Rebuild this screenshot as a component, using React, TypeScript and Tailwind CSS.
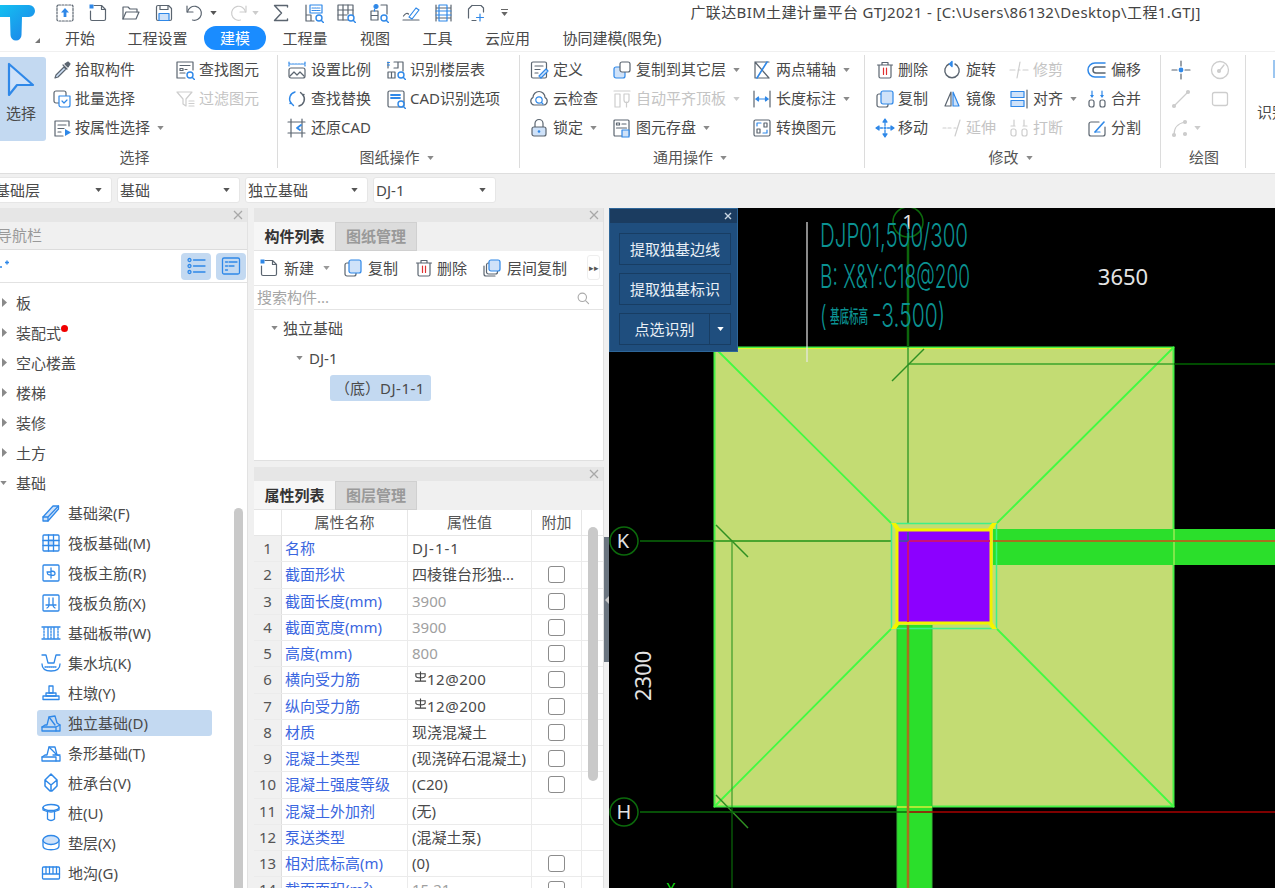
import React from "react";

const G = "#5b6570", B = "#2f88e8", L = "#cfe2f9", D = "#cdcdcd";

function Ic({ children, s = 20, c = G, w = 1.2 }: { children: React.ReactNode; s?: number; c?: string; w?: number }) {
  return (
    <svg width={s} height={s} viewBox="0 0 20 20" fill="none" stroke={c} strokeWidth={w} strokeLinecap="round" strokeLinejoin="round" className="shrink-0 block">
      {children}
    </svg>
  );
}
const Mag = () => <g stroke={B} strokeWidth={1.4}><circle cx="15" cy="15" r="3" fill="#fff" /><path d="M17.2 17.2 19.4 19.4" /></g>;
const Caret = ({ className = "", c = "#8a8a8a" }: { className?: string; c?: string }) => (
  <svg width="7" height="4" viewBox="0 0 8 5" className={"shrink-0 block " + className}><path d="M0 0h8L4 5z" fill={c} /></svg>
);

const icons: Record<string, React.ReactNode> = {
  upload: <Ic><rect x="2" y="2" width="16" height="16" rx="1.5" strokeDasharray="2 1.4" /><path d="M10 5 6 9.5h2.6V14h2.8V9.5H14z" fill={B} stroke="none" /></Ic>,
  newdoc: <Ic><path d="M6 2.5h7.5l4 4V16a1.5 1.5 0 0 1-1.5 1.5H4A1.5 1.5 0 0 1 2.500 16V8" /><path d="M13.500 2.500v4h4" /><rect x="1.500" y="1.500" width="4" height="4" fill={B} stroke="none" /></Ic>,
  open: <Ic><path d="M2 16V4h5l2 2h7v3" /><path d="M2 16l3-7h13l-3 7z" /></Ic>,
  save: <Ic><path d="M2.500 4a1.500 1.500 0 0 1 1.500-1.500h10.500l3 3V16a1.500 1.500 0 0 1-1.500 1.500H4A1.500 1.500 0 0 1 2.500 16z" /><path d="M6 3v3.500h8V3" /><rect x="5" y="10.500" width="10" height="7" fill={L} stroke={B} /></Ic>,
  undo: <Ic><path d="M3 3v6h6" /><path d="M3.500 9a7 7 0 1 1 5 8" /></Ic>,
  redo: <Ic c={D}><path d="M17 3v6h-6" /><path d="M16.500 9a7 7 0 1 0-5 8" /></Ic>,
  sum: <Ic w={1.4}><path d="M16.500 4V2.500H3.500L10.500 10l-7 7.500h13V16" /></Ic>,
  q1: <Ic><path d="M2 2v16h8M2 12h5v6" /><rect x="6" y="2" width="12" height="8" stroke={B} /><path d="M8 5h8M8 7.500h8" stroke={B} strokeDasharray="1.500 1" /><Mag /></Ic>,
  q2: <Ic><rect x="2" y="2" width="15" height="15" /><path d="M2 7h15M2 12h9M7 2v15M12 2v9" /><Mag /></Ic>,
  q3: <Ic><path d="M2 8h7v9H2zM2 12.500h7M12 2h6v9" /><circle cx="7" cy="3.500" r="2" fill={B} stroke={B} /><path d="M5.500 6v2" stroke={B} /><Mag /></Ic>,
  pen: <Ic><path d="M2 17h16" /><path d="M2.500 13q3-4 5-2" /><path d="M8 14 15 5l3 2-7 9z" stroke={B} /></Ic>,
  frame: <Ic><path d="M2 2v16M17 2v16M2 5h15M2 15h15" /><path d="M2 8h15M2 12h15" stroke={B} /><rect x="5" y="2" width="8" height="16" stroke={B} /></Ic>,
  addframe: <Ic><path d="M6 2.500h9l2.500 2.500v4M2.500 6v9M2.500 6 6 2.500M6 17.500h4" /><path d="M14 11v7M10.500 14.500h7" stroke={B} /></Ic>,
  eyedrop: <Ic><path d="M3 18l1-3 8-8 2 2-8 8z" fill={L} /><path d="M11 5l4 4M13 4l3-2 2 2-2 3z" fill={G} /></Ic>,
  batch: <Ic><rect x="2" y="2" width="12" height="12" rx="2" /><path d="M7 7h11v9a2 2 0 0 1-2 2H9a2 2 0 0 1-2-2z" stroke={B} fill="#fff" /><path d="M10 12l2 2 3-3" stroke={B} /></Ic>,
  attr: <Ic><path d="M17 8V3H3v15h8" /><path d="M6 7h8M6 10.500h6M6 14h3" /><path d="M13 11l6 3.500-6 3.500z" fill={B} stroke="none" /></Ic>,
  find: <Ic><path d="M10 18H2V2h16v8" /><path d="M5 5.500h10" /><rect x="5" y="8.500" width="3" height="2" /><path d="M10 9.500h2M5 13h5" /><Mag /></Ic>,
  filter: <Ic c={D}><path d="M2 3h15l-6 7v7l-3-2v-5z" /><path d="M14 12h5M14 14.500h5M14 17h5" /></Ic>,
  scale: <Ic><path d="M2 2v4M18 2v4M2 4h16" stroke={B} strokeDasharray="2 1" /><rect x="2" y="8" width="16" height="10" rx="2" /><path d="M3 16l4-4 3 3 3-3 4 4" /></Ic>,
  floortb: <Ic><path d="M2 8V2M2 12h7v6H2zM5.500 12v6" /><path d="M8 2h9v9M12 2v6H8" /><path d="M1.500 2.500h2M1.500 5h2" stroke={B} /><Mag /></Ic>,
  replace: <Ic w={1.4}><path d="M8 3a7 7 0 0 0-4 11" stroke={B} /><path d="M12 17a7 7 0 0 0 4-11" /><path d="M3 14.500l1-.5 2.500 2.500" stroke={B} /><path d="M17 5.500l-1 .5-2.500-2.500" /></Ic>,
  cadopt: <Ic><rect x="2" y="2" width="16" height="16" rx="1.5" /><path d="M5 6h9M5 9h9" stroke={B} strokeWidth={1.8} strokeDasharray="2 .8" /><Mag /></Ic>,
  restore: <Ic><path d="M4 1v18M15 1v18M1 4h17M1 15h17" /><path d="M14 7l-4 3 3 2" stroke={B} strokeWidth={1.8} /></Ic>,
  define: <Ic><rect x="2.500" y="2" width="15" height="16" rx="1.500" /><path d="M6 6h8M6 9.500h5M6 13h3" /><path d="M10 16l7-7 2 2-7 7z" stroke={B} fill={L} /></Ic>,
  cloud: <Ic><path d="M5 16a4 4 0 0 1-1-7.500 6 6 0 0 1 12 0 4 4 0 0 1-1 7.500z" /><circle cx="10" cy="11" r="3.200" stroke={B} /><path d="M12.500 13.500 14 15" stroke={B} /></Ic>,
  lock: <Ic><path d="M6 9V5.500a4 4 0 0 1 8 0V9" /><rect x="3" y="9" width="14" height="9" rx="2" fill={L} /><circle cx="10" cy="13.500" r="1.300" fill={B} stroke="none" /></Ic>,
  copyto: <Ic><rect x="2" y="7" width="11" height="11" rx="2" fill={L} stroke={B} /><rect x="8" y="2" width="10" height="10" rx="2" fill="#fff" /></Ic>,
  auto: <Ic c={D}><path d="M2 2h16M3 5h5v13H3z" /><path d="M12 5h5v6a2.500 2.500 0 0 1-5 0z" /><path d="M14.500 13v5" /></Ic>,
  store: <Ic><rect x="2" y="2" width="15" height="16" rx="1" /><rect x="4.500" y="5" width="3" height="2" /><path d="M10 6h4M4.500 10h10" /><rect x="10" y="12" width="7" height="7" fill={L} stroke={B} /></Ic>,
  axis: <Ic><path d="M3 2h14M3 18h14M3 2l14 16M3 2v16" /><path d="M15 2 5 18" stroke={B} strokeWidth={1.600} /></Ic>,
  dim: <Ic><path d="M2 2v16M18 2v16" /><path d="M4 10h12" stroke={B} /><path d="M4 10l2.500-2v4zM16 10l-2.500-2v4z" fill={B} stroke={B} /></Ic>,
  conv: <Ic><rect x="2" y="2" width="16" height="16" rx="1.500" /><path d="M5 8V5h4M15 12v3h-4" stroke={B} /><path d="M5 11h3v4H5zM12 5h3v4h-3z" /></Ic>,
  del: <Ic><path d="M2.500 5h15M7 5V2.500h6V5M4 5v11.500A1.500 1.500 0 0 0 5.500 18h9a1.500 1.500 0 0 0 1.500-1.500V5" /><path d="M8.500 8v6.500M11.500 8v6.500" stroke="#e03030" /></Ic>,
  rot: <Ic w={1.4}><path d="M7 4a7.200 7.200 0 1 0 6 0" /><path d="M10 1.500 7.500 4l2.500 2.500z" fill={B} stroke={B} /></Ic>,
  trim: <Ic c={D}><path d="M1 10h5M9 10h2M14 10h5M11 2 8 18" /></Ic>,
  offset: <Ic w={1.5}><path d="M18 3H8a7 7 0 0 0 0 14h10" stroke={B} /><path d="M18 7H9a3 3 0 0 0 0 6h9" /></Ic>,
  copy: <Ic><rect x="2" y="5" width="11" height="13" rx="2" /><rect x="6" y="2" width="12" height="13" rx="2" fill={L} stroke={B} /></Ic>,
  mirror: <Ic><path d="M9 3 3 17h6z" /><path d="M11 3l6 14h-6z" fill={L} stroke={B} /></Ic>,
  align: <Ic><path d="M18 1v18" /><rect x="2" y="2.500" width="13" height="6" stroke={B} fill={L} /><rect x="2" y="11.500" width="13" height="6" stroke={B} fill={L} /></Ic>,
  merge: <Ic><rect x="2" y="11" width="5" height="7" rx="2" /><rect x="13" y="11" width="5" height="7" rx="2" /><path d="M5 2v5M15 2v5" stroke={B} /><path d="M5 9 3 6h4zM15 9l-2-3h4z" fill={B} stroke="none" /></Ic>,
  move: <Ic w={1.3} c={B}><path d="M10 2v16M2 10h16" strokeDasharray="2 1.500" /><path d="M10 1 8 4h4zM10 19l-2-3h4zM1 10l3-2v4zM19 10l-3-2v4z" fill={B} /></Ic>,
  extend: <Ic c={D}><path d="M1 10h3M6 10h3M12 10h2M18 2l-5 16" /></Ic>,
  brk: <Ic c={D}><rect x="2" y="11" width="5" height="7" rx="2" /><rect x="13" y="11" width="5" height="7" rx="2" /><path d="M5 2v5M15 2v5M2 8h4M14 8h4" /></Ic>,
  split: <Ic><path d="M12 4H4a2 2 0 0 0-2 2v10a2 2 0 0 0 2 2h12a2 2 0 0 0 2-2V9" /><path d="M8 14l9-10" stroke={B} strokeWidth={1.600} /><path d="M8 14h5" stroke={B} /></Ic>,
  pt: <Ic><path d="M10 1v5M10 14v5M1 10h5M14 10h5" /><circle cx="10" cy="10" r="2.400" fill={B} stroke="none" /></Ic>,
  gauge: <Ic c={D} w={1.300}><circle cx="10" cy="10" r="8.500" /><circle cx="9" cy="11" r="1.400" fill={D} /><path d="M10 10l4-5" /></Ic>,
  line: <Ic c={D}><path d="M3 17 17 3" /><circle cx="3" cy="17" r="1.500" fill={D} /><circle cx="17" cy="3" r="1.500" fill={D} /></Ic>,
  rect: <Ic c={D} w={1.300}><rect x="2.500" y="3.500" width="15" height="13" rx="2" /></Ic>,
  arc: <Ic c={D}><path d="M3 17q0-11 11-13" /><circle cx="3" cy="17" r="1.500" fill={D} /><circle cx="14" cy="4" r="1.500" fill={D} /><circle cx="14" cy="16" r="1.500" fill={D} /></Ic>,
  beam: <Ic c={B} w={1.300}><path d="M2 14 12 3h5.500v3L7 18H2z" fill={L} /><path d="M2 14h5v4M7 14 17.500 3" /></Ic>,
  raft: <Ic c={B} w={1.300}><rect x="2" y="2" width="16" height="16" rx="1" /><path d="M2 7.500h16M2 12.500h16M7.500 2v16M12.500 2v16" /><path d="M7.500 7.500h5v5h-5z" fill={L} /></Ic>,
  raftm: <Ic c={B} w={1.300}><rect x="2" y="2" width="16" height="16" rx="1" /><path d="M10 5v10M6 9h4M10 8q4 0 4 2.500t-4 1.500q-4 0-3.500-2" /></Ic>,
  raftn: <Ic c={B} w={1.300}><rect x="2" y="2" width="16" height="16" rx="1" /><path d="M8 5v6M12 5v6M5 12h10M8 12q0 2-2 3M12 12q0 2 2 3" /></Ic>,
  band: <Ic c={B} w={1.300}><path d="M1 4h18M1 16h18M7 4v12M13 4v12" /><path d="M3 5v10M10 5v10M17 5v10" strokeDasharray="1.500 1.500" /></Ic>,
  pit: <Ic c={B} w={1.300}><path d="M1 2h4l2 8h6l2-8h4" /><path d="M1 11q0 7 9 7t9-7" /><path d="M4 14h12" strokeDasharray="1 1" /></Ic>,
  pier: <Ic c={B} w={1.300}><rect x="8" y="3" width="4" height="7" /><rect x="5" y="10" width="10" height="3" /><rect x="2" y="13" width="16" height="3.500" /></Ic>,
  iso: <Ic c={B} w={1.300}><path d="M1 18v-4l3-2h2l2-8 6-1 2 7 3 2v6z" /><path d="M1 14h14v4M15 14l4-2M8 4l6 8" /></Ic>,
  strip: <Ic c={B} w={1.300}><path d="M1 18v-4l3-2h2l2-8h6l2 8 3 1v5z" /><path d="M1 14h14v4M8 4l8 8M12 12h7" /></Ic>,
  cap: <Ic c={B} w={1.500}><path d="M10 1 4 7l6 5 6-5zM4 7v6l5 5M16 7v6l-5 5M10 12v6" /></Ic>,
  pile: <Ic c={B} w={1.300}><ellipse cx="10" cy="4.500" rx="8" ry="3" /><path d="M2 4.500V7q8 4 16 0V4.500" /><path d="M6.500 9.500v6.500q3.500 3 7 0V9.500" /></Ic>,
  pad: <Ic c={B} w={1.300}><path d="M2 7v6c0 5 16 5 16 0V7" /><ellipse cx="10" cy="7" rx="8" ry="4.500" fill={L} /></Ic>,
  ditch: <Ic c={B} w={1.300}><rect x="1.500" y="4" width="17" height="12" rx="1" /><path d="M1.500 11h17M5 4v7M8.500 4v7M12 4v7M15.500 4v7" /></Ic>,
  list: <Ic c={B} w={1.300}><circle cx="3.500" cy="4" r="1.500" /><circle cx="3.500" cy="10" r="1.500" /><circle cx="3.500" cy="16" r="1.500" /><path d="M7.500 4H19M7.500 10H19M7.500 16H19" /></Ic>,
  card: <Ic c={B} w={1.300}><rect x="1.500" y="2" width="17" height="16" rx="1.500" /><path d="M4.500 6h2M8 6h8M4.500 10h2M8 10h5M4.500 14h2" /></Ic>,
  layercopy: <Ic><path d="M2 8v8a2 2 0 0 0 2 2h9" /><rect x="4.500" y="5" width="11" height="11" rx="2" /><rect x="7" y="2" width="11" height="11" rx="2" fill={L} stroke={B} /></Ic>,
  search: <Ic c="#aaa" w={1.600}><circle cx="9" cy="9" r="6" /><path d="M14 14l4 4" /></Ic>,
};

function RItem({ i, t, caret, off, gap = 4, className = "" }: { i: string; t: string; caret?: boolean; off?: boolean; gap?: number; className?: string }) {
  return (
    <div className={"flex h-[29px] items-center whitespace-nowrap " + (off ? "text-[#c4c4c4] " : "") + className}>
      {icons[i]}
      <span style={{ marginLeft: gap }}>{t}</span>
      {caret && <Caret className="ml-[7px]" c={off ? "#ccc" : "#8a8a8a"} />}
    </div>
  );
}

function GroupLabel({ t, caret, className = "" }: { t: string; caret?: boolean; className?: string }) {
  return (
    <div className={"flex h-[27px] items-center justify-center pt-[5px] leading-none text-[#555] " + className}>
      {t}
      {caret && <Caret className="ml-[7px]" />}
    </div>
  );
}

const quick: [string, string][] = [
  ["upload", "w-[33px]"], ["newdoc", "w-[33px]"], ["open", "w-[33px]"], ["save", "w-[33px]"],
];

function Close() {
  return (
    <svg width="10" height="10" viewBox="0 0 10 10" className="block" stroke="#a8a8a8" strokeWidth="1.300"><path d="M1 1l8 8M9 1 1 9" /></svg>
  );
}

const nav1 = ["板", "装配式", "空心楼盖", "楼梯", "装修", "土方"];
const nav2: [string, string][] = [
  ["beam", "基础梁(F)"], ["raft", "筏板基础(M)"], ["raftm", "筏板主筋(R)"], ["raftn", "筏板负筋(X)"], ["band", "基础板带(W)"],
  ["pit", "集水坑(K)"], ["pier", "柱墩(Y)"], ["iso", "独立基础(D)"], ["strip", "条形基础(T)"], ["cap", "桩承台(V)"],
  ["pile", "桩(U)"], ["pad", "垫层(X)"], ["ditch", "地沟(G)"],
];

const rows: [string, string, string, boolean, boolean?][] = [
  ["1", "名称", "DJ-1-1", false],
  ["2", "截面形状", "四棱锥台形独...", true],
  ["3", "截面长度(mm)", "3900", true, true],
  ["4", "截面宽度(mm)", "3900", true, true],
  ["5", "高度(mm)", "800", true, true],
  ["6", "横向受力筋", "@12@200", true],
  ["7", "纵向受力筋", "@12@200", true],
  ["8", "材质", "现浇混凝土", true],
  ["9", "混凝土类型", "(现浇碎石混凝土)", true],
  ["10", "混凝土强度等级", "(C20)", true],
  ["11", "混凝土外加剂", "(无)", false],
  ["12", "泵送类型", "(混凝土泵)", false],
  ["13", "相对底标高(m)", "(0)", true],
  ["14", "截面面积(m²)", "15.21", true, true],
];

const Rebar = () => (
  <svg width="13" height="14" viewBox="0 0 14 14" fill="none" stroke="#444" strokeWidth="1.200" className="ml-[2px] block -mt-[5px] shrink-0">
    <path d="M7 1v10M2 6V3.500h10V6q0 2-5 2T2 6zM1 11.500h12" />
  </svg>
);

function TabStrip({ a, b }: { a: string; b: string }) {
  return (
    <div className="flex h-[29px] shrink-0 bg-[#f0f0f0] font-semibold">
      <div className="flex w-[81px] items-center justify-center border-b border-[#e4e4e4] bg-[#f6f6f6] text-[#333]">{a}</div>
      <div className="flex w-[82px] items-center justify-center border border-[#d0d0d0] bg-[#dcdcdc] text-[#999]">{b}</div>
    </div>
  );
}

function Floating() {
  const btn = "flex h-[32px] w-[112px] items-center justify-center border border-[#183d63] bg-[#1f4e7e]";
  return (
    <div className="absolute left-0 top-0 z-10 h-[144px] w-[129px] border border-[#2e6699] bg-[#1f4e7e] text-[#e9eff5]">
      <div className="flex h-[14px] items-center justify-end bg-[#1b3c60] pr-[5px]">
        <svg width="8" height="8" viewBox="0 0 8 8" stroke="#c9d6e3" strokeWidth="1.400"><path d="M1 1l6 6M7 1 1 7" /></svg>
      </div>
      <div className="flex flex-col gap-[8px] pl-[9px] pt-[10px]">
        <div className={btn}>提取独基边线</div>
        <div className={btn}>提取独基标识</div>
        <div className="flex h-[32px] w-[112px] border border-[#183d63]">
          <div className="flex flex-1 items-center justify-center border-r border-[#183d63]">点选识别</div>
          <div className="flex w-[20px] items-center justify-center"><Caret c="#fff" /></div>
        </div>
      </div>
    </div>
  );
}

function Drawing() {
  const sq = "#c3dc73";
  const beam = "#2bdf2b";
  return (
    <svg width="666" height="680" viewBox="609 208 666 680" className="block" fontFamily="'Noto Sans','Noto Sans CJK SC',sans-serif">
      <rect x="714.500" y="347.500" width="459" height="459" fill={sq} stroke="#46f046" strokeWidth="2" />
      <path d="M714.500 348.500H1173.500" stroke="#e6f52e" strokeWidth="1" />
      <rect x="993" y="529" width="181" height="36" fill={beam} />
      <rect x="1175" y="529" width="100" height="36" fill={beam} />
      <rect x="897" y="625" width="35" height="263" fill={beam} />
      <path d="M897 625V888M932 625V888" stroke="#36b536" strokeWidth="1" />
      <path d="M714 347 891 523M1174 347 997 523M714 807 891 629M1174 807 997 629" stroke="#42fa42" strokeWidth="1.800" />
      <path d="M1174 529v36" stroke="#7de84a" strokeWidth="2" />
      <path d="M897 807h35" stroke="#d9ef3a" strokeWidth="1.500" />
      {/* grid lines */}
      <path d="M908 233V347" stroke="#0c660c" strokeWidth="2.500" />
      <path d="M908 347V523" stroke="#5fae3e" strokeWidth="2" />
      <path d="M908 364H1174" stroke="#3aa52a" strokeWidth="1.500" />
      <path d="M1174 364H1275" stroke="#006400" strokeWidth="1.500" />
      <path d="M892 381 924 349" stroke="#2f8f22" strokeWidth="1.500" />
      <path d="M640 541H714" stroke="#0a6a0a" strokeWidth="1.500" />
      <path d="M714 541H891" stroke="#4aa52e" strokeWidth="2" />
      <path d="M716 525 748 557M716 795 748 828" stroke="#2f8f22" strokeWidth="1.500" />
      <path d="M732 541V807" stroke="#3a9a28" strokeWidth="1.200" />
      <path d="M732 807V888" stroke="#0a6a0a" strokeWidth="1.200" />
      <path d="M640 812H908" stroke="#0a6a0a" strokeWidth="1.500" />
      <path d="M908 812H1275" stroke="#a80000" strokeWidth="1.500" />
      {/* column */}
      <rect x="891.500" y="523.500" width="105" height="105" fill="none" stroke="#3df08a" strokeWidth="1.500" />
      <path d="M891 523h5l5 7h-3v3zM997 523h-5l-5 7h3v3zM891 629h5l5-7h-3v-3zM997 629h-5l-5-7h3v-3z" fill="#f5f500" />
      <rect x="897" y="530" width="94" height="93" fill="#8c00ff" stroke="#f2f200" strokeWidth="3" />
      <path d="M908 541H990" stroke="#c8107a" strokeWidth="2" />
      <path d="M908 541V622" stroke="#c8107a" strokeWidth="2" />
      <path d="M899 541H908M908 532v9" stroke="#4a4aa8" strokeWidth="2" />
      <path d="M993 541H1275" stroke="#a8701e" strokeWidth="2" />
      <path d="M908 625V888" stroke="#a8701e" strokeWidth="2.500" />
      {/* axis bubbles */}
      <circle cx="908" cy="222" r="15" fill="none" stroke="#0c6a0c" strokeWidth="1.500" />
      <circle cx="624" cy="541" r="14" fill="none" stroke="#0c6a0c" strokeWidth="1.500" />
      <circle cx="624" cy="812" r="14" fill="none" stroke="#0c6a0c" strokeWidth="1.500" />
      <text x="908" y="229" textAnchor="middle" fontSize="20" fill="#e4e4e4">1</text>
      <text x="623" y="548" textAnchor="middle" fontSize="20" fill="#e4e4e4">K</text>
      <text x="624" y="819" textAnchor="middle" fontSize="20" fill="#e4e4e4">H</text>
      <text x="1123" y="285" textAnchor="middle" fontSize="22" fill="#e4e4e4">3650</text>
      <text transform="translate(651 701) rotate(-90)" fontSize="22" fill="#e4e4e4">2300</text>
      <text x="671" y="893" textAnchor="middle" fontSize="15" fill="#14e014">Y</text>
      <path d="M807 222V362" stroke="#e8e8e8" strokeWidth="1.200" />
      <g fill="#0b9292" fontFamily="Inter,'Noto Sans',sans-serif" fontWeight="300">
        <text transform="translate(820 247) scale(1 1.700)" fontSize="19" textLength="148" lengthAdjust="spacingAndGlyphs">DJP01,500/300</text>
        <text transform="translate(820 288) scale(1 1.700)" fontSize="19" textLength="150" lengthAdjust="spacingAndGlyphs">B: X&amp;Y:C18@200</text>
        <text transform="translate(820 326) scale(1 1.500)" fontSize="19">(</text>
        <text transform="translate(830 323) scale(1 1.500)" fontSize="12" fontWeight="500" fontFamily="'Noto Sans CJK SC',sans-serif" textLength="38" lengthAdjust="spacingAndGlyphs">基底标高</text>
        <text transform="translate(872 327) scale(1 1.700)" fontSize="19" textLength="73" lengthAdjust="spacingAndGlyphs">-3.500)</text>
      </g>
    </svg>
  );
}

export default function App() {
  return (
    <div className="h-[888px] w-[1275px] overflow-hidden bg-[#f0f0f0] font-['Noto_Sans','Noto_Sans_CJK_SC',sans-serif] text-[15px] leading-none text-[#4a4a4a]">
      {/* top: logo + quick bar + tabs */}
      <div className="flex h-[51px] bg-white">
        <div className="relative w-[48px] shrink-0">
          <svg width="48" height="51" viewBox="0 0 48 51" className="block">
            <defs>
              <linearGradient id="lg" x1="0" y1="0" x2="1" y2="1">
                <stop offset="0" stopColor="#14c4f2" />
                <stop offset="1" stopColor="#1d7fe8" />
              </linearGradient>
            </defs>
            <path d="M-4 5h33a4.500 4.500 0 0 1 0 12h-7l-.5 18a5.500 5.500 0 0 1-11 0l-.5-18H-4z" fill="url(#lg)" />
            <path d="M40 38v5h-5z" fill="#777" />
          </svg>
        </div>
        <div className="flex min-w-0 flex-1 flex-col">
          <div className="flex h-[25px] items-center">
            {quick.map(([k, w]) => (
              <div key={k} className={w + " flex justify-center"}>{icons[k]}</div>
            ))}
            <div className="flex w-[44px] items-center pl-[4px]">{icons.undo}<Caret className="ml-[6px]" c="#555" /></div>
            <div className="flex w-[41px] items-center pl-[5px]">{icons.redo}<Caret className="ml-[3px]" c="#ccc" /></div>
            {["sum", "q1", "q2", "q3", "pen", "frame", "addframe"].map((k) => (
              <div key={k} className="flex w-[32.500px] justify-center">{icons[k]}</div>
            ))}
            <div className="ml-[8px] flex flex-col items-center gap-[2px]"><div className="h-[1px] w-[7px] bg-[#666]" /><Caret c="#666" /></div>
            <div className="ml-[183px] whitespace-nowrap text-[15px] tracking-[0.36px] text-[#444]">广联达BIM土建计量平台 GTJ2021 - [C:\Users\86132\Desktop\工程1.GTJ]</div>
          </div>
          <div className="flex h-[26px] items-center gap-[32.500px] pl-[17px] text-[#4a4a4a]">
            <span>开始</span>
            <span>工程设置</span>
            <span className="-mx-[16px] flex h-[24px] items-center rounded-full bg-[#1a8cff] px-[16px] text-white">建模</span>
            <span>工程量</span>
            <span>视图</span>
            <span>工具</span>
            <span>云应用</span>
            <span>协同建模(限免)</span>
          </div>
        </div>
      </div>

      {/* ribbon */}
      <div className="flex h-[122px] border-t border-[#f0f0f0] bg-white pb-[5px] pt-[3px]">
        <div className="flex w-[278px] shrink-0 flex-col border-r border-[#dcdcdc]">
          <div className="flex h-[87px]">
            <div className="mt-[2px] flex h-[84px] w-[46px] flex-col items-center rounded-r-[3px] bg-[#c3d9f1] pr-[4px] pt-[5px]">
              <svg width="30" height="36" viewBox="0 0 30 36" fill={L} stroke={B} strokeWidth="2.200" strokeLinejoin="round" className="block"><path d="M3 2v31l8-10h16z" /></svg>
              <span className="mt-[8px]">选择</span>
            </div>
            <div className="ml-[6px] w-[123px]">
              <RItem i="eyedrop" t="拾取构件" gap={3} />
              <RItem i="batch" t="批量选择" gap={3} />
              <RItem i="attr" t="按属性选择" caret gap={3} />
            </div>
            <div>
              <RItem i="find" t="查找图元" />
              <RItem i="filter" t="过滤图元" off />
            </div>
          </div>
          <GroupLabel t="选择" className="pr-[8px]" />
        </div>

        <div className="flex w-[242px] shrink-0 flex-col border-r border-[#dcdcdc]">
          <div className="flex h-[87px] pl-[9px]">
            <div className="w-[99px]">
              <RItem i="scale" t="设置比例" gap={4} />
              <RItem i="replace" t="查找替换" gap={4} />
              <RItem i="restore" t="还原CAD" gap={4} />
            </div>
            <div>
              <RItem i="floortb" t="识别楼层表" />
              <RItem i="cadopt" t="CAD识别选项" />
            </div>
          </div>
          <GroupLabel t="图纸操作" caret className="pr-[4px]" />
        </div>

        <div className="flex w-[345px] shrink-0 flex-col border-r border-[#dcdcdc]">
          <div className="flex h-[87px] pl-[9px]">
            <div className="w-[83px]">
              <RItem i="define" t="定义" />
              <RItem i="cloud" t="云检查" />
              <RItem i="lock" t="锁定" caret />
            </div>
            <div className="w-[140px]">
              <RItem i="copyto" t="复制到其它层" caret />
              <RItem i="auto" t="自动平齐顶板" caret off />
              <RItem i="store" t="图元存盘" caret />
            </div>
            <div>
              <RItem i="axis" t="两点辅轴" caret />
              <RItem i="dim" t="长度标注" caret />
              <RItem i="conv" t="转换图元" />
            </div>
          </div>
          <GroupLabel t="通用操作" caret className="pr-[4px]" />
        </div>

        <div className="flex w-[296px] shrink-0 flex-col border-r border-[#dcdcdc]">
          <div className="flex h-[87px] pl-[10px]">
            <div className="w-[67px]">
              <RItem i="del" t="删除" gap={3} />
              <RItem i="copy" t="复制" gap={3} />
              <RItem i="move" t="移动" gap={3} />
            </div>
            <div className="w-[67px]">
              <RItem i="rot" t="旋转" />
              <RItem i="mirror" t="镜像" />
              <RItem i="extend" t="延伸" off />
            </div>
            <div className="w-[78px]">
              <RItem i="trim" t="修剪" off />
              <RItem i="align" t="对齐" caret />
              <RItem i="brk" t="打断" off />
            </div>
            <div>
              <RItem i="offset" t="偏移" />
              <RItem i="merge" t="合并" />
              <RItem i="split" t="分割" />
            </div>
          </div>
          <GroupLabel t="修改" caret className="pr-[4px]" />
        </div>

        <div className="flex w-[85px] shrink-0 flex-col border-r border-[#dcdcdc]">
          <div className="grid h-[87px] grid-cols-[39px_1fr] content-start pl-[10px]">
            <div className="flex h-[29px] items-center">{icons.pt}</div>
            <div className="flex h-[29px] items-center">{icons.gauge}</div>
            <div className="flex h-[29px] items-center">{icons.line}</div>
            <div className="flex h-[29px] items-center">{icons.rect}</div>
            <div className="col-span-2 flex h-[29px] items-center">{icons.arc}<Caret className="ml-[3px]" c="#ccc" /></div>
          </div>
          <GroupLabel t="绘图" className="pl-[2px]" />
        </div>

        <div className="flex flex-col whitespace-nowrap pl-[11px]">
          <div className="ml-[16px] mt-[5px] h-[18px] w-[4px] bg-[#9cc6f0]" />
          <div className="mt-[27px]">识别</div>
        </div>
      </div>

      {/* combo bar */}
      <div className="flex h-[35px] items-start gap-[5px] border-t border-[#dedede] pt-[3px]">
        {[["-ml-[8px] w-[120px] pl-[2px]", "基础层"], ["w-[123px] pl-[2px]", "基础"], ["w-[123px] pl-[2px]", "独立基础"], ["w-[123px] pl-[2px]", "DJ-1"]].map(([c, t]) => (
          <div key={t} className={"flex h-[26px] items-center justify-between rounded-[3px] border border-[#e6e6e6] bg-white pr-[9px] " + c}>
            <span>{t}</span>
            <Caret c="#555" />
          </div>
        ))}
      </div>

      {/* main */}
      <div className="flex h-[680px]">
        {/* navigation panel */}
        <div className="relative flex h-full w-[248px] shrink-0 flex-col overflow-hidden border-r border-[#e2e2e2] bg-white">
          <div className="flex h-[14px] shrink-0 items-center justify-end bg-[#e6e6e6] pr-[4px]"><Close /></div>
          <div className="flex h-[28px] shrink-0 items-center border-b border-[#dcdcdc] bg-[#f0f0f0] text-[#999]"><span className="-ml-[3px]">导航栏</span></div>
          <div className="flex h-[33px] shrink-0 items-center justify-between border-b border-[#e2e2e2] pr-[1px]">
            <svg width="10" height="12" viewBox="0 0 10 12" stroke={B} strokeWidth="1.400" className="block"><path d="M5 2.500h4M7 .5v4M-1 7h3" /></svg>
            <div className="flex gap-[5px]">
              <div className="flex h-[27px] w-[30px] items-center justify-center rounded-[4px] bg-[#c3d9f1]">{icons.list}</div>
              <div className="flex h-[27px] w-[30px] items-center justify-center rounded-[4px] bg-[#c3d9f1]">{icons.card}</div>
            </div>
          </div>
          <div className="pt-[5px]">
            {nav1.map((t) => (
              <div key={t} className="relative flex h-[30px] items-center pl-[16px]">
                <svg width="5" height="9" viewBox="0 0 5 9" className="absolute left-[2px] top-[10px]"><path d="M0 0l5 4.500L0 9z" fill="#8a8a8a" /></svg>
                {t}
                {t === "装配式" && <span className="absolute left-[61px] top-[7px] h-[7px] w-[7px] rounded-full bg-[#f00000]" />}
              </div>
            ))}
            <div className="relative flex h-[30px] items-center pl-[16px]">
              <Caret className="absolute left-[0px] top-[13px]" />
              基础
            </div>
            {nav2.map(([k, t]) => (
              <div key={t} className="flex h-[30px] items-center">
                <div className={"ml-[37px] flex h-[26px] w-[175px] items-center rounded-[3px] pl-[4px] " + (k === "iso" ? "bg-[#c3d9f1]" : "")}>
                  {icons[k]}
                  <span className="ml-[7px]">{t}</span>
                </div>
              </div>
            ))}
          </div>
          <div className="absolute left-[234px] top-[300px] h-[400px] w-[9px] rounded-full bg-[#c9c9c9]" />
        </div>

        {/* middle panels */}
        <div className="ml-[6px] flex h-full w-[350px] shrink-0 flex-col">
          <div className="flex h-[253px] shrink-0 flex-col border-b border-r border-[#e0e0e0] bg-white">
            <div className="flex h-[14px] shrink-0 items-center justify-end bg-[#e6e6e6] pr-[4px]"><Close /></div>
            <TabStrip a="构件列表" b="图纸管理" />
            <div className="relative flex h-[35px] shrink-0 items-center border-b border-[#e8e8e8] pl-[5px]">
              {icons.newdoc}
              <span className="ml-[5px]">新建</span>
              <Caret className="ml-[9px]" c="#999" />
              <span className="ml-[13px]">{icons.copy}</span>
              <span className="ml-[5px]">复制</span>
              <span className="ml-[16px]">{icons.del}</span>
              <span className="ml-[3px]">删除</span>
              <span className="ml-[15px]">{icons.layercopy}</span>
              <span className="ml-[5px]">层间复制</span>
              <div className="absolute left-[333px] top-[4px] flex h-[25px] w-[13px] items-center justify-center rounded-[3px] border border-[#eee] text-[9px] text-[#555]">▸▸</div>
            </div>
            <div className="flex h-[24px] shrink-0 items-center justify-between border-b border-[#e4e4e4] pl-[3px] pr-[10px] text-[#a6a6a6]">
              <span>搜索构件...</span>
              <span className="block scale-[.7]">{icons.search}</span>
            </div>
            <div className="pt-[3px]">
              <div className="flex h-[30px] items-center pl-[17px]"><Caret c="#888" /><span className="ml-[5px]">独立基础</span></div>
              <div className="flex h-[30px] items-center pl-[42px]"><Caret c="#888" /><span className="ml-[6px]">DJ-1</span></div>
              <div className="flex h-[30px] items-center pl-[76px]">
                <div className="flex h-[26px] w-[101px] items-center whitespace-nowrap rounded-[3px] bg-[#c3d9f1] pl-[5px]">（底）<span className="tracking-[0.5px]">DJ-1-1</span></div>
              </div>
            </div>
          </div>
          <div className="mt-[6px] flex min-h-0 flex-1 flex-col overflow-hidden border-r border-[#e0e0e0] bg-white">
            <div className="flex h-[14px] shrink-0 items-center justify-end bg-[#e6e6e6] pr-[4px]"><Close /></div>
            <TabStrip a="属性列表" b="图层管理" />
            <div className="relative min-h-0 flex-1">
              <div className="grid h-[26px] grid-cols-[28px_126px_124px_50px] border-b border-[#e6e6e6] text-[#555]">
                <div className="border-r border-[#e6e6e6]" />
                <div className="flex items-center justify-center border-r border-[#e6e6e6]">属性名称</div>
                <div className="flex items-center justify-center border-r border-[#e6e6e6]">属性值</div>
                <div className="flex items-center justify-center border-r border-[#e6e6e6]">附加</div>
              </div>
              {rows.map(([n, name, val, chk, gray]) => (
                <div key={n} className="grid h-[26.250px] grid-cols-[28px_126px_124px_50px] border-b border-[#ebebeb]">
                  <div className="flex items-center justify-center border-r border-[#dedede] bg-[#f0f0f0] text-[#555]">{n}</div>
                  <div className="flex items-center border-r border-[#ebebeb] pl-[3px] text-[#3a66e0]">{name}</div>
                  <div className={"flex items-center overflow-hidden whitespace-nowrap border-r border-[#ebebeb] pl-[4px] " + (gray ? "text-[#a0a0a0]" : "text-[#4a4a4a]") + (n === "1" ? " tracking-[1px]" : "")}>
                    {val.startsWith("@") ? (<><Rebar /><span className="tracking-[0.5px]">{val.slice(1)}</span></>) : val}
                  </div>
                  <div className="flex items-center justify-center border-r border-[#ebebeb]">
                    {chk && <div className="h-[17px] w-[17px] rounded-[3px] border border-[#8c8c8c] bg-white" />}
                  </div>
                </div>
              ))}
              <div className="absolute left-[334px] top-[17px] h-[254px] w-[10px] rounded-full bg-[#c9c9c9]" />
            </div>
          </div>
        </div>

        {/* splitter */}
        <div className="w-[5px] shrink-0">
          <div className="mt-[329px] flex h-[125px] items-center justify-center bg-[#6b7580]">
            <svg width="4" height="8" viewBox="0 0 4 8"><path d="M4 0v8L0 4z" fill="#c8c8c8" /></svg>
          </div>
        </div>

        {/* canvas */}
        <div className="relative h-full min-w-0 flex-1 overflow-hidden bg-black">
          <Drawing />
          <Floating />
        </div>
      </div>
    </div>
  );
}
